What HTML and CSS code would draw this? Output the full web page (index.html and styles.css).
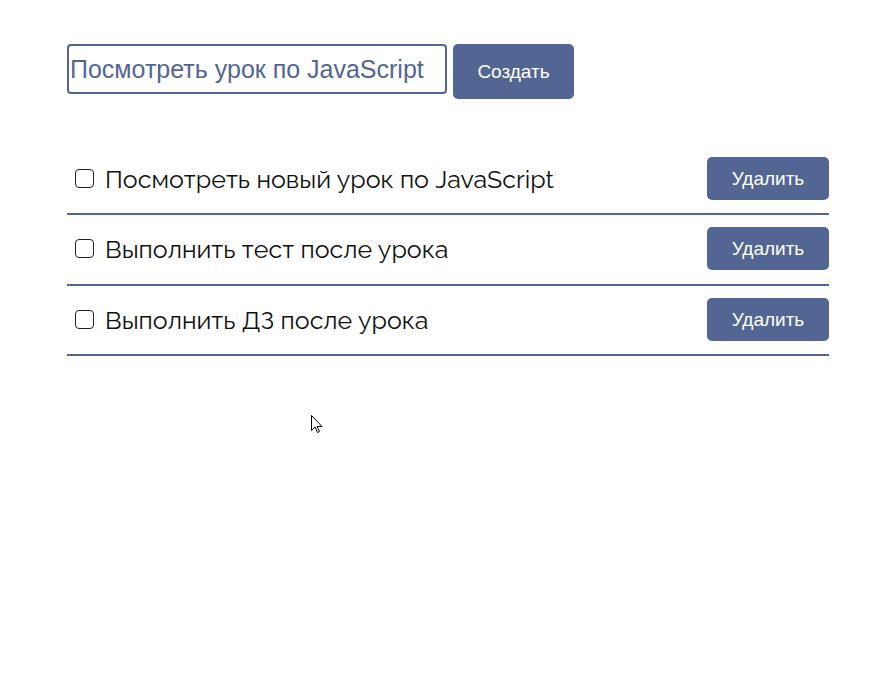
FILE: index.html
```html
<!DOCTYPE html>
<html lang="ru">
<head>
<meta charset="utf-8">
<title>Todo</title>
<link rel="stylesheet" href="styles.css">
</head>
<body>
<div class="app">
  <form class="create">
    <input class="create-input" type="text" value="Посмотреть урок по JavaScript">
    <button class="btn btn-create" type="button">Создать</button>
  </form>
  <ul class="list">
    <li class="item">
      <label class="item-label"><input type="checkbox" class="item-check"><span class="item-text">Посмотреть новый урок по JavaScript</span></label>
      <button class="btn btn-delete" type="button">Удалить</button>
    </li>
    <li class="item">
      <label class="item-label"><input type="checkbox" class="item-check"><span class="item-text">Выполнить тест после урока</span></label>
      <button class="btn btn-delete" type="button">Удалить</button>
    </li>
    <li class="item">
      <label class="item-label"><input type="checkbox" class="item-check"><span class="item-text">Выполнить ДЗ после урока</span></label>
      <button class="btn btn-delete" type="button">Удалить</button>
    </li>
  </ul>
</div>
<svg class="cursor" width="12" height="19" viewBox="0 0 12 19"><path d="M0.5 0.5 L0.5 15.5 L4 12 L6.5 17.5 L8.5 16.5 L6 11.5 L11 11.5 Z" fill="#fff" stroke="#000" stroke-width="1"/></svg>
</body>
</html>
```
FILE: styles.css
```css
html, body {
  margin: 0;
  padding: 0;
  background: #fff;
}
body {
  position: relative;
  min-height: 695px;
}
.app {
  padding: 44px 0 0 67px;
  width: 762px;
}
.create {
  display: flex;
  align-items: flex-start;
  gap: 6px;
  margin: 0;
}
.create-input {
  box-sizing: border-box;
  width: 380px;
  height: 50px;
  border: 2px solid #536693;
  border-radius: 4px;
  padding: 0 1px;
  font-family: "Liberation Sans", Arial, sans-serif;
  font-size: 25px;
  color: #536693;
  outline: none;
}
.btn {
  border: none;
  background: #536693;
  color: #fff;
  font-family: "Liberation Sans", Arial, sans-serif;
  border-radius: 5px;
  cursor: pointer;
}
.btn-create {
  width: 121px;
  height: 55px;
  font-size: 19px;
}
.list {
  list-style: none;
  margin: 46px 0 0;
  padding: 0;
}
.item {
  display: flex;
  align-items: center;
  justify-content: space-between;
  padding: 12px 0 13px;
  border-bottom: 2px solid #536693;
}
.item:nth-child(2) {
  padding-bottom: 14px;
}
.item-label {
  display: flex;
  align-items: center;
  gap: 11px;
  padding-left: 8px;
}
.item-check {
  appearance: none;
  -webkit-appearance: none;
  box-sizing: border-box;
  width: 19px;
  height: 19px;
  margin: 0;
  border: 1.5px solid #222;
  border-radius: 4px;
  background: #fff;
}
.item-check:checked {
  background: #536693;
  border-color: #536693;
}
.item-text {
  font-family: "Raleway", "Lato", sans-serif;
  font-size: 25px;
  color: #111;
}
.btn-delete {
  width: 122px;
  height: 43px;
  font-size: 19px;
}
.cursor {
  position: absolute;
  left: 311px;
  top: 415px;
}
```
